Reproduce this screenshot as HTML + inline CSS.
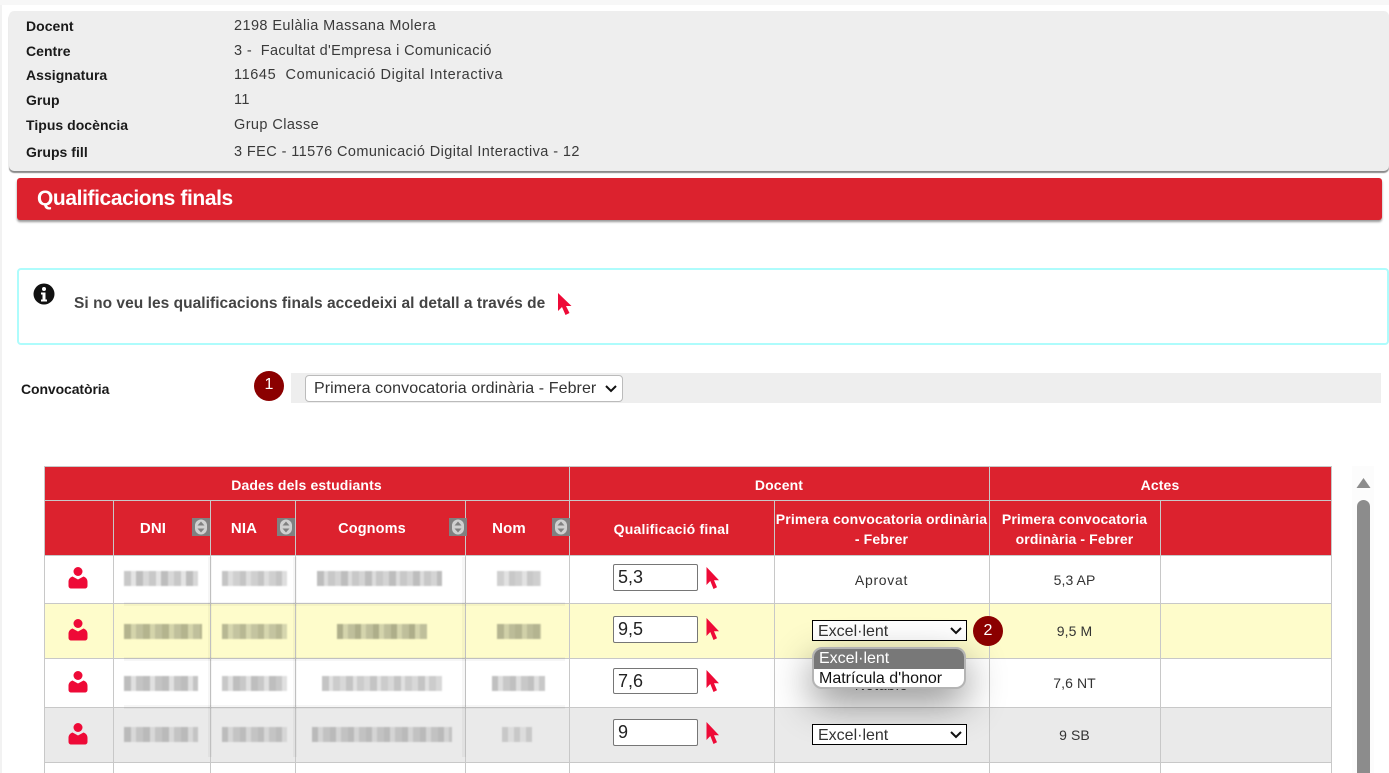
<!DOCTYPE html>
<html lang="ca"><head><meta charset="utf-8"><title>Qualificacions finals</title>
<style>
html,body{margin:0;padding:0;width:1389px;height:773px;overflow:hidden;background:#fff}
body{position:relative;font-family:"Liberation Sans",sans-serif;color:#333}
.a{position:absolute;white-space:nowrap}
.lb{font-size:14px;font-weight:bold;color:#1a1a1a;letter-spacing:.03px;line-height:18px;left:26px}
.vl{font-size:14.5px;color:#3a3a3a;letter-spacing:.41px;line-height:18px;left:234px}
.th{font-size:14px;font-weight:bold;color:#fff;text-align:center;letter-spacing:.13px;line-height:20px}
.td{font-size:14px;color:#333;text-align:center;line-height:18px;letter-spacing:.1px}
.hl{position:absolute;background:#c8c8c8;height:1px}
.vlin{position:absolute;background:#c8c8c8;width:1px}
.inp{position:absolute;left:613px;width:83px;background:#fff;border:1px solid #767676;border-radius:2px;font-size:18px;color:#222;box-sizing:content-box;line-height:24px;text-indent:4px}
.sel{position:absolute;left:812px;width:153px;height:19px;border:2px solid #000;border-width:1.5px;background:#fff;font-size:16px;color:#333;line-height:22px;text-indent:5px}
.sort{position:absolute;top:518px;width:18px;height:18px;background:#808080}
.m{position:absolute;filter:blur(.8px);height:15px}
.b{position:absolute;background:rgba(0,0,0,.035)}
</style></head><body>
<div class="a" style="left:0;top:0;width:1389px;height:5px;background:#f7f7f7"></div>
<div class="a" style="left:0;top:5px;width:2px;height:768px;background:#f2f2f2"></div>

<div class="a" style="left:9px;top:11px;width:1380px;height:160px;background:#eee;border-radius:5px;box-shadow:0 2px 1px #8a8a8a"></div>
<div class="a lb" style="top:17px">Docent</div><div class="a vl" style="top:17px">2198 Eulàlia Massana Molera</div>
<div class="a lb" style="top:42px">Centre</div><div class="a vl" style="top:42px;letter-spacing:.36px">3 -&nbsp; Facultat d'Empresa i Comunicació</div>
<div class="a lb" style="top:66px">Assignatura</div><div class="a vl" style="top:66px;letter-spacing:.6px">11645&nbsp; Comunicació Digital Interactiva</div>
<div class="a lb" style="top:91px">Grup</div><div class="a vl" style="top:91px">11</div>
<div class="a lb" style="top:116px">Tipus docència</div><div class="a vl" style="top:116px">Grup Classe</div>
<div class="a lb" style="top:143px">Grups fill</div><div class="a vl" style="top:143px">3 FEC - 11576 Comunicació Digital Interactiva - 12</div>

<div class="a" style="left:17px;top:178px;width:1365px;height:42px;background:#dc222e;border-radius:3px;box-shadow:0 2px 2px #999"></div>
<div class="a" style="left:37px;top:186px;font-size:21px;font-weight:bold;color:#fff;letter-spacing:-.4px;line-height:26px">Qualificacions finals</div>

<div class="a" style="left:17px;top:268px;width:1368px;height:73px;border:2px solid #aefcfc;border-radius:4px"></div>
<svg class="a" style="left:33px;top:283px" width="22" height="22" viewBox="0 0 22 22"><circle cx="11" cy="11" r="10.5" fill="#111"/><circle cx="11" cy="6" r="2" fill="#fff"/><path d="M8 9.500h4.500v7H14v2H8v-2h1.500v-5H8z" fill="#fff"/></svg>
<div class="a" style="left:74px;top:295px;font-size:15.5px;font-weight:bold;color:#444;letter-spacing:.04px;line-height:18px">Si no veu les qualificacions finals accedeixi al detall a través de</div>
<svg class="a" style="left:557px;top:293px" width="15" height="23" viewBox="0 0 15 23"><path d="M1 0v18l4-4 3.500 8 4-2-3.500-7h5.500z" fill="#ee0a37"/></svg>

<div class="a" style="left:21px;top:380px;font-size:14px;font-weight:bold;color:#1a1a1a;letter-spacing:-.1px;line-height:18px">Convocatòria</div>
<div class="a" style="left:254px;top:371px;width:30px;height:30px;border-radius:50%;background:#8b0000;color:#fff;font-size:16px;text-align:center;line-height:28px">1</div>
<div class="a" style="left:291px;top:373px;width:1090px;height:30px;background:#eee"></div>
<div class="a" style="left:305px;top:375px;width:316px;height:25px;background:#fff;border:1px solid #bbb;border-radius:4px;font-size:16px;color:#333;line-height:26px;text-indent:8px;letter-spacing:.08px">Primera convocatoria ordinària - Febrer</div>
<svg class="a" style="left:604px;top:384px" width="14" height="10" viewBox="0 0 14 10"><path d="M2 2l5 5 5-5" fill="none" stroke="#111" stroke-width="2"/></svg>

<!-- table backgrounds -->
<div class="a" style="left:44px;top:466px;width:1288px;height:90px;background:#dc222e"></div>
<div class="a" style="left:44px;top:603px;width:1288px;height:55px;background:#fefccb"></div>
<div class="a" style="left:44px;top:707px;width:1288px;height:55px;background:#eaeaea"></div>

<div class="hl" style="left:44px;top:466px;width:1288px"></div>
<div class="hl" style="left:44px;top:500px;width:1288px"></div>
<div class="hl" style="left:44px;top:555px;width:1288px"></div>
<div class="hl" style="left:44px;top:603px;width:1288px"></div>
<div class="hl" style="left:44px;top:658px;width:1288px"></div>
<div class="hl" style="left:44px;top:707px;width:1288px"></div>
<div class="hl" style="left:44px;top:762px;width:1288px"></div>
<div class="vlin" style="left:44px;top:466px;height:307px"></div>
<div class="vlin" style="left:113px;top:500px;height:273px"></div>
<div class="vlin" style="left:210px;top:500px;height:273px"></div>
<div class="vlin" style="left:295px;top:500px;height:273px"></div>
<div class="vlin" style="left:465px;top:500px;height:273px"></div>
<div class="vlin" style="left:569px;top:466px;height:307px"></div>
<div class="vlin" style="left:774px;top:500px;height:273px"></div>
<div class="vlin" style="left:989px;top:466px;height:307px"></div>
<div class="vlin" style="left:1160px;top:500px;height:273px"></div>
<div class="vlin" style="left:1331px;top:466px;height:307px"></div>

<div class="a th" style="left:44px;top:475px;width:525px">Dades dels estudiants</div>
<div class="a th" style="left:569px;top:475px;width:420px">Docent</div>
<div class="a th" style="left:989px;top:475px;width:342px">Actes</div>
<div class="a th" style="left:113px;top:519px;width:80px;font-size:15px">DNI</div>
<div class="a th" style="left:210px;top:519px;width:68px;font-size:15px">NIA</div>
<div class="a th" style="left:295px;top:519px;width:154px;font-size:14.5px">Cognoms</div>
<div class="a th" style="left:466px;top:519px;width:86px;font-size:15px">Nom</div>
<div class="a th" style="left:569px;top:519px;width:205px;letter-spacing:.2px">Qualificació final</div>
<div class="a th" style="left:774px;top:509px;width:215px;white-space:normal;letter-spacing:.15px">Primera convocatoria ordinària<br>- Febrer</div>
<div class="a th" style="left:989px;top:509px;width:171px;white-space:normal;letter-spacing:.1px">Primera convocatoria<br>ordinària - Febrer</div>

<svg style="display:none"><symbol id="so" viewBox="0 0 18 18"><rect x="3" y="1.500" width="12" height="15" rx="6" fill="#d0d0d0"/><path d="M9 3.500l3.500 4h-7zM9 14.500l3.500-4h-7z" fill="#808080"/></symbol>
<symbol id="p" viewBox="0 0 20 22"><circle cx="10" cy="4.500" r="4.500" fill="#ee0a37"/><path d="M4.500 9.500 10 12.500l5.500-3c2.500 1 4 2.500 4 5.500v3.500c0 2-1 3-3 3H3.500c-2 0-3-1-3-3V15c0-3 1.500-4.500 4-5.500z" fill="#ee0a37"/></symbol>
<symbol id="c" viewBox="0 0 13 23"><path d="M.5 0v18l3.800-4 3.200 8 3.500-1.700-3-7h5z" fill="#ee0a37"/></symbol></svg>
<svg class="sort" style="left:192px"><use href="#so" width="18" height="18"/></svg>
<svg class="sort" style="left:277px"><use href="#so" width="18" height="18"/></svg>
<svg class="sort" style="left:449px"><use href="#so" width="18" height="18"/></svg>
<svg class="sort" style="left:552px"><use href="#so" width="18" height="18"/></svg>

<svg class="a" style="left:68px;top:567px" width="20" height="22"><use href="#p" width="20" height="22"/></svg>
<svg class="a" style="left:68px;top:619px" width="20" height="22"><use href="#p" width="20" height="22"/></svg>
<svg class="a" style="left:68px;top:671px" width="20" height="22"><use href="#p" width="20" height="22"/></svg>
<svg class="a" style="left:68px;top:723px" width="20" height="22"><use href="#p" width="20" height="22"/></svg>

<!-- blurred personal data -->
<div class="m" style="left:124px;top:571px;width:74px;background:repeating-linear-gradient(90deg,#c8c8c8 0 7px,#e4e4e4 7px 12px,#bdbdbd 12px 19px,#d8d8d8 19px 25px)"></div>
<div class="m" style="left:222px;top:571px;width:65px;background:repeating-linear-gradient(90deg,#c4c4c4 0 6px,#dedede 6px 11px,#cfcfcf 11px 18px)"></div>
<div class="m" style="left:317px;top:571px;width:125px;background:repeating-linear-gradient(90deg,#bdbdbd 0 7px,#dcdcdc 7px 11px,#c8c8c8 11px 18px,#d4d4d4 18px 24px)"></div>
<div class="m" style="left:497px;top:571px;width:44px;background:repeating-linear-gradient(90deg,#cfcfcf 0 7px,#e2e2e2 7px 12px,#c8c8c8 12px 18px)"></div>

<div class="m" style="left:124px;top:624px;width:78px;background:repeating-linear-gradient(90deg,#b4b48e 0 7px,#d4d4ab 7px 12px,#c0c09c 12px 19px)"></div>
<div class="m" style="left:222px;top:624px;width:65px;background:repeating-linear-gradient(90deg,#b8b893 0 6px,#d6d6ae 6px 11px,#c4c4a0 11px 18px)"></div>
<div class="m" style="left:337px;top:624px;width:90px;background:repeating-linear-gradient(90deg,#aeae8a 0 6px,#d4d4ac 6px 11px,#bfbf9b 11px 18px)"></div>
<div class="m" style="left:497px;top:624px;width:44px;background:repeating-linear-gradient(90deg,#b4b490 0 7px,#d0d0a8 7px 12px,#bcbc98 12px 18px)"></div>

<div class="m" style="left:124px;top:676px;width:74px;background:repeating-linear-gradient(90deg,#bdbdbd 0 7px,#e0e0e0 7px 12px,#c4c4c4 12px 19px)"></div>
<div class="m" style="left:222px;top:676px;width:65px;background:repeating-linear-gradient(90deg,#c8c8c8 0 6px,#e0e0e0 6px 11px,#bebebe 11px 18px)"></div>
<div class="m" style="left:322px;top:676px;width:120px;background:repeating-linear-gradient(90deg,#c4c4c4 0 7px,#e0e0e0 7px 11px,#cccccc 11px 18px,#d8d8d8 18px 24px)"></div>
<div class="m" style="left:492px;top:676px;width:53px;background:repeating-linear-gradient(90deg,#c0c0c0 0 6px,#dedede 6px 11px,#c8c8c8 11px 18px)"></div>

<div class="m" style="left:124px;top:727px;width:74px;background:repeating-linear-gradient(90deg,#bababa 0 7px,#d8d8d8 7px 12px,#c4c4c4 12px 19px)"></div>
<div class="m" style="left:222px;top:727px;width:65px;background:repeating-linear-gradient(90deg,#bcbcbc 0 6px,#d6d6d6 6px 11px,#c4c4c4 11px 18px)"></div>
<div class="m" style="left:312px;top:727px;width:140px;background:repeating-linear-gradient(90deg,#bababa 0 6px,#d4d4d4 6px 11px,#c2c2c2 11px 18px)"></div>
<div class="m" style="left:502px;top:727px;width:30px;background:repeating-linear-gradient(90deg,#c8c8c8 0 6px,#dcdcdc 6px 12px)"></div>

<div class="b" style="left:208px;top:557px;width:4px;height:200px"></div>
<div class="b" style="left:293px;top:557px;width:4px;height:200px"></div>
<div class="b" style="left:462px;top:557px;width:4px;height:200px"></div>
<div class="b" style="left:124px;top:602px;width:441px;height:4px"></div>
<div class="b" style="left:124px;top:657px;width:441px;height:4px"></div>
<div class="b" style="left:124px;top:705px;width:441px;height:4px"></div>

<div class="inp" style="top:564px;height:25px">5,3</div>
<div class="inp" style="top:616px;height:25px">9,5</div>
<div class="inp" style="top:668px;height:24px">7,6</div>
<div class="inp" style="top:719px;height:25px">9</div>
<svg class="a" style="left:706px;top:567px" width="13" height="23"><use href="#c" width="13" height="23"/></svg>
<svg class="a" style="left:706px;top:618px" width="13" height="23"><use href="#c" width="13" height="23"/></svg>
<svg class="a" style="left:706px;top:670px" width="13" height="23"><use href="#c" width="13" height="23"/></svg>
<svg class="a" style="left:706px;top:722px" width="13" height="23"><use href="#c" width="13" height="23"/></svg>

<div class="a td" style="left:774px;top:571px;width:215px;letter-spacing:.7px">Aprovat</div>
<div class="a td" style="left:989px;top:571px;width:171px">5,3 AP</div>
<div class="a td" style="left:989px;top:622px;width:171px">9,5 M</div>
<div class="a td" style="left:989px;top:674px;width:171px">7,6 NT</div>
<div class="a td" style="left:989px;top:726px;width:171px">9 SB</div>

<div class="a td" style="left:774px;top:676px;width:215px;letter-spacing:.7px">Notable</div>

<div class="sel" style="top:620px">Excel·lent</div>
<svg class="a" style="left:949px;top:626px" width="14" height="10" viewBox="0 0 14 10"><path d="M2 2l5 5 5-5" fill="none" stroke="#111" stroke-width="2"/></svg>

<div class="a" style="left:812px;top:647px;width:150px;height:38px;border:2px solid #b4b4b4;border-radius:10px;background:#fff;overflow:hidden;box-shadow:0 14px 40px rgba(0,0,0,.45);font-size:16px;line-height:20px">
<div style="background:#787878;color:#fff;text-indent:5px;height:20px">Excel·lent</div>
<div style="color:#111;text-indent:5px;height:18px;line-height:19px">Matrícula d'honor</div>
</div>

<div class="sel" style="top:724px">Excel·lent</div>
<svg class="a" style="left:949px;top:730px" width="14" height="10" viewBox="0 0 14 10"><path d="M2 2l5 5 5-5" fill="none" stroke="#111" stroke-width="2"/></svg>
<div class="a" style="left:973px;top:616px;width:30px;height:30px;border-radius:50%;background:#8b0000;color:#fff;font-size:16px;text-align:center;line-height:29px">2</div>

<div class="a" style="left:1352px;top:466px;width:22px;height:307px;background:#fcfcfc"></div>
<svg class="a" style="left:1356px;top:477px" width="15" height="12"><path d="M7.500 1 14.500 11H.5z" fill="#8c8c8c"/></svg>
<div class="a" style="left:1357px;top:500px;width:13px;height:290px;background:#8c8c8c;border-radius:7px"></div>
</body></html>
